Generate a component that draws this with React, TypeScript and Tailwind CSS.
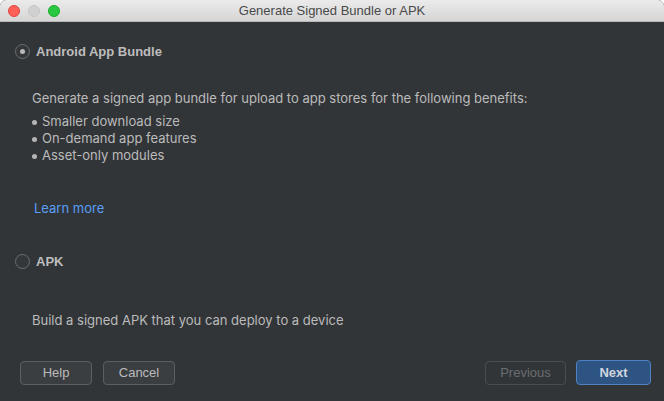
import { ReactElement } from "react";

const Radio = ({ checked }: { checked?: boolean }): ReactElement => (
  <span className="flex h-[15px] w-[15px] items-center justify-center rounded-full border border-[#6b6e70] bg-[#34373a]">
    {checked && <span className="h-[5px] w-[5px] rounded-full bg-[#b8b8b8]" />}
  </span>
);

const Bullet = ({ text }: { text: string }): ReactElement => (
  <div className="flex h-[17px] items-center gap-[5px]">
    <span className="h-[5px] w-[5px] rounded-full bg-[#b5b5b5]" />
    <span>{text}</span>
  </div>
);

const labelFont = { fontFamily: '"Liberation Sans", Arial, sans-serif' };

export default function App(): ReactElement {
  return (
    <div
      className="flex h-[401px] w-[664px] flex-col overflow-hidden rounded-t-[6px] bg-[#323538] text-[13px] text-[#bbbbbb]"
      style={{ fontFamily: 'Inter, "Liberation Sans", Arial, sans-serif' }}
    >
      {/* title bar */}
      <div className="relative flex h-[22px] shrink-0 items-center justify-center border-b border-[#b9b9b9] bg-gradient-to-b from-[#ebebeb] to-[#d5d5d5]">
        <div className="absolute left-[8px] top-[5px] flex gap-[8px]">
          <span className="h-[12px] w-[12px] rounded-full border border-[#e0443e] bg-[#fe5f57]" />
          <span className="h-[12px] w-[12px] rounded-full border border-[#c5c5c5] bg-[#d0d0d0]" />
          <span className="h-[12px] w-[12px] rounded-full border border-[#1aab29] bg-[#28c940]" />
        </div>
        <span className="text-[13px] text-[#4a4a4a]" style={labelFont}>
          Generate Signed Bundle or APK
        </span>
      </div>

      <div className="flex flex-1 flex-col px-[15px]">
        <div className="mt-[20px] flex items-center gap-[6px]">
          <Radio checked />
          <span className="font-bold text-[#bdbdbd]" style={labelFont}>
            Android App Bundle
          </span>
        </div>

        <div className="ml-[17px] mt-[28px]">
          <div className="h-[17px] leading-[17px]">
            Generate a signed app bundle for upload to app stores for the following benefits:
          </div>
          <div className="mt-[7px] flex flex-col">
            <Bullet text="Smaller download size" />
            <Bullet text="On-demand app features" />
            <Bullet text="Asset-only modules" />
          </div>
          <div className="ml-[2px] mt-[35px] h-[17px] leading-[17px] text-[#589df6]">Learn more</div>
        </div>

        <div className="mt-[35px] flex items-center gap-[6px]">
          <Radio />
          <span className="font-bold text-[#bdbdbd]" style={labelFont}>
            APK
          </span>
        </div>

        <div className="ml-[17px] mt-[41px] h-[17px] leading-[17px]">
          Build a signed APK that you can deploy to a device
        </div>

        <div className="mt-auto mb-[16px] flex items-center" style={labelFont}>
          <button className="ml-[5px] h-[24px] w-[72px] rounded-[4px] border border-[#5c5f61] bg-[#3b3e41] text-[#bbbbbb]">
            Help
          </button>
          <button className="ml-[11px] h-[24px] w-[72px] rounded-[4px] border border-[#5c5f61] bg-[#3b3e41] text-[#bbbbbb]">
            Cancel
          </button>
          <button className="ml-auto h-[24px] w-[81px] rounded-[4px] border border-[#4a4d50] bg-transparent text-[#6a6d70]">
            Previous
          </button>
          <button className="ml-[10px] mr-[-2px] h-[25px] w-[75px] rounded-[4px] border border-[#4e82c2] bg-[#2e5484] font-bold text-[#d0d6de]">
            Next
          </button>
        </div>
      </div>
    </div>
  );
}
